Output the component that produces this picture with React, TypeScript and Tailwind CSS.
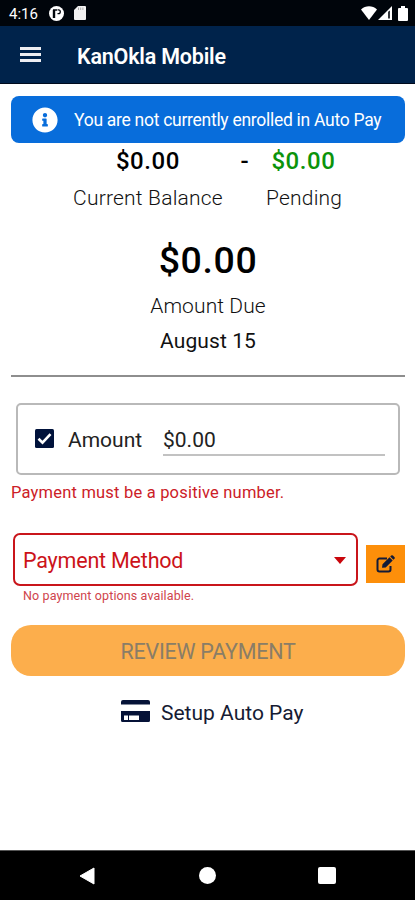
import { FaInfoCircle } from "react-icons/fa";

function StatusBar() {
  return (
    <div className="flex h-[26px] items-center justify-between bg-[#00050b] pl-[9px] pr-[7px] text-white">
      <div className="flex items-center">
        <span className="mt-[2px] w-[40px] text-[15px] leading-none">4:16</span>
        <svg className="mt-px h-[15px] w-[15px]" viewBox="0 0 15 15">
          <circle cx="7.5" cy="7.5" r="7.5" fill="#fff" />
          <path d="M5 12V4" fill="none" stroke="#00050b" strokeWidth="2.4" />
          <path d="M4 4h4M8.5 3.8h.9a1.9 1.9 0 0 1 0 3.8H8.5" fill="none" stroke="#00050b" strokeWidth="1.3" />
        </svg>
        <svg className="ml-[10px] h-[14px] w-3" viewBox="0 0 12 14">
          <path d="M4 0h7a1 1 0 0 1 1 1v12a1 1 0 0 1-1 1H1a1 1 0 0 1-1-1V4z" fill="#f2f2f2" />
          <path d="M4.5 1.5v2.5M6.7 1.5v2.5M8.9 1.5v2.5" stroke="#aaa" strokeWidth="1" />
        </svg>
      </div>
      <div className="flex items-center">
        <svg className="h-[14px] w-4" viewBox="0 0 16 14">
          <path d="M0 3.6C4.5-.8 11.5-.8 16 3.6L8 14z" fill="#fff" />
        </svg>
        <svg className="ml-px h-[14px] w-[14px]" viewBox="0 0 14 14">
          <path d="M0 14 14 0v14z" fill="#fff" />
          <path d="M10.2 5.8v6.7h1.6V4.5z" fill="#00050b" />
        </svg>
        <svg className="ml-[6px] h-[15px] w-[10px]" viewBox="0 0 10 15">
          <path d="M3 0h4v2h2a1 1 0 0 1 1 1v11a1 1 0 0 1-1 1H1a1 1 0 0 1-1-1V3a1 1 0 0 1 1-1h2z" fill="#fff" />
        </svg>
      </div>
    </div>
  );
}

function Header() {
  return (
    <header className="flex h-[58px] items-center border-b border-[#000a1c] bg-[#00234b] pl-5 text-white">
      <button className="flex w-[21px] flex-col gap-[3px]" aria-label="Menu">
        <span className="h-[3px] w-full bg-[#eeeef2]" />
        <span className="h-[3px] w-full bg-[#eeeef2]" />
        <span className="h-[3px] w-full bg-[#eeeef2]" />
      </button>
      <h1 className="ml-9 mt-1 text-[21.5px] font-semibold leading-none tracking-[-0.2px]">KanOkla Mobile</h1>
    </header>
  );
}

function Balances() {
  return (
    <section className="text-center text-[#111]">
      <div className="flex">
        <div className="ml-[62px] w-[150px]">
          <div className="text-[24px] font-medium leading-[36px] tracking-[0.6px] text-black">$0.00</div>
          <div className="text-[21px] font-light leading-[39px] tracking-[0.2px]">Current Balance</div>
        </div>
        <div className="w-[43px] text-[24px] font-medium leading-[36px] text-black">-</div>
        <div className="w-[75px]">
          <div className="text-[24px] font-medium leading-[36px] tracking-[0.6px] text-[#0b930b]">$0.00</div>
          <div className="text-[21px] font-light leading-[39px] tracking-[0.2px]">Pending</div>
        </div>
      </div>
      <div className="mt-[17px] text-[37.5px] font-medium leading-[50px] tracking-[0.6px] text-black">$0.00</div>
      <div className="mt-1 text-[21px] font-light leading-[35px] tracking-[0.1px]">Amount Due</div>
      <div className="text-[21px] leading-[35px] tracking-[0.1px]">August 15</div>
    </section>
  );
}

function CheckBox() {
  return (
    <svg className="-mt-px h-[19px] w-[19px]" viewBox="0 0 19 19">
      <rect width="19" height="19" rx="1.5" fill="#00123b" />
      <path d="m3.5 9.8 4 3.9 8-8.5" fill="none" stroke="#fff" strokeWidth="2.6" />
    </svg>
  );
}

function CardIcon() {
  return (
    <svg className="h-[22px] w-[29px]" viewBox="0 0 29 22">
      <path d="M2 0h25a2 2 0 0 1 2 2v2.6H0V2a2 2 0 0 1 2-2zM0 11h29v9.5a1.5 1.5 0 0 1-1.500 1.500h-26A1.500 1.500 0 0 1 0 20.500z" fill="#051237" />
      <path d="M3 15.5h4V20H3zM8 15.5h10V20H8z" fill="#fff" />
    </svg>
  );
}

function EditIcon() {
  return (
    <svg className="h-[18px] w-[19px]" viewBox="0 0 19 18">
      <path d="M11 3.5H3.5a2 2 0 0 0-2 2v9a2 2 0 0 0 2 2h9a2 2 0 0 0 2-2V11" fill="none" stroke="currentColor" strokeWidth="2" />
      <path d="m6 12.8.5-3.500 7-7 3.200 3.200-7 7zM14.200 1.600l1-1a1.200 1.200 0 0 1 1.700 0l1.500 1.500a1.200 1.200 0 0 1 0 1.700l-1 1z" fill="currentColor" />
    </svg>
  );
}

function PaymentForm() {
  return (
    <section>
      <div className="mx-[5px] mt-[26px] flex h-[72px] items-center rounded-[5px] border-2 border-[#b9b9b9] pl-[17px] text-[21px] text-[#222]">
        <CheckBox />
        <label className="ml-[14px] mt-[3px] w-[95px]">Amount</label>
        <div className="h-[34px] w-[222px] border-b-2 border-[#c2c2c2] leading-[36px]">$0.00</div>
      </div>
      <p className="mt-[6px] text-[16.5px] leading-6 tracking-[0.2px] text-[#cc2027]">Payment must be a positive number.</p>
      <div className="mt-[28px] flex items-center gap-2 pl-[2px]">
        <div className="flex h-[53px] w-[345px] items-center justify-between rounded-[7px] border-2 border-[#c9151b] pl-2 pr-[10px] text-[21.5px] text-[#cc1319]">
          <span className="mt-1 tracking-[-0.2px]">Payment Method</span>
          <span className="mt-px h-0 w-0 border-x-[6.5px] border-t-[7px] border-x-transparent border-t-[#c9060c]" />
        </div>
        <button className="mt-[9px] flex h-[38px] w-[39px] items-center justify-center bg-[#fd8f0a] text-[#131b38]" aria-label="Edit">
          <EditIcon />
        </button>
      </div>
      <p className="ml-3 mt-[2px] text-[12.5px] leading-4 tracking-[0.12px] text-[#cf444c]">No payment options available.</p>
      <button className="mt-[21px] h-[51px] w-full rounded-[20px] bg-[#fcae4c] pt-1 text-[21.5px] tracking-[-0.25px] text-[#8a7d67]">
        REVIEW PAYMENT
      </button>
      <div className="mt-[17px] flex h-9 items-center pl-[110px]">
        <CardIcon />
        <span className="ml-[11px] mt-[5px] text-[21px] text-[#161b33]">Setup Auto Pay</span>
      </div>
    </section>
  );
}

function NavigationBar() {
  return (
    <nav className="flex h-[50px] items-center border-t border-[#555] bg-black pl-[79px]">
      <svg className="h-[18px] w-4" viewBox="0 0 16 18">
        <path d="M15 1v16L1 9z" fill="#fff" stroke="#fff" strokeWidth="1" strokeLinejoin="round" />
      </svg>
      <span className="ml-[104px] h-[17px] w-[17px] rounded-full bg-white" />
      <span className="ml-[102px] h-[17px] w-[18px] rounded-[2px] bg-white" />
    </nav>
  );
}

export default function App() {
  return (
    <div className="flex h-[900px] w-[415px] flex-col overflow-hidden whitespace-nowrap bg-white font-[Roboto,sans-serif]">
      <StatusBar />
      <Header />
      <main className="flex-1 pl-[11px] pr-[10px] pt-3">
        <div className="flex h-[47px] items-center rounded-lg bg-[#086ddb] pl-[21px] text-white">
          <FaInfoCircle className="h-[26px] w-[26px]" />
          <span className="ml-4 mt-[2px] text-[17.5px] tracking-[-0.28px]">You are not currently enrolled in Auto Pay</span>
        </div>
        <Balances />
        <div className="mt-4 h-[2px] bg-[#8e8e8e]" />
        <PaymentForm />
      </main>
      <NavigationBar />
    </div>
  );
}
